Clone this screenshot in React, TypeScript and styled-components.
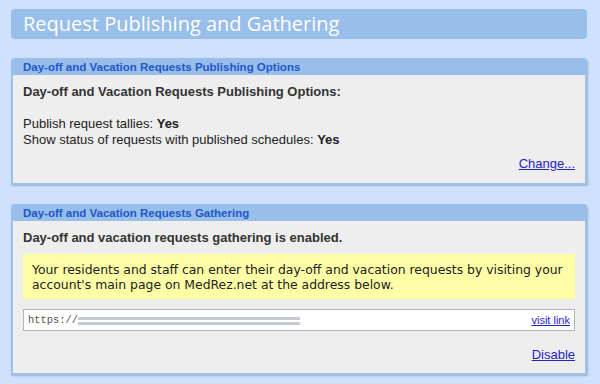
import React from "react";
import styled, { createGlobalStyle } from "styled-components";

const Global = createGlobalStyle`
  html, body { margin: 0; padding: 0; background: #cfe1fc; }
  body { font-family: "Liberation Sans", Arial, sans-serif; }
`;

const Page = styled.div`
  width: 600px;
  height: 384px;
  box-sizing: border-box;
  padding: 9px 13px 0 11px;
  display: flex;
  flex-direction: column;
  gap: 19px;
  background: #cfe1fc;
`;

const TitleBar = styled.h1`
  margin: 0;
  height: 30px;
  box-sizing: border-box;
  padding: 0 12px;
  background: #98bee9;
  border-radius: 4px;
  color: #ffffff;
  font-family: "Open Sans", "DejaVu Sans", sans-serif;
  font-weight: 400;
  font-size: 20px;
  line-height: 30px;
`;

const Panel = styled.section`
  display: flex;
  flex-direction: column;
  border-radius: 4px 4px 0 0;
  box-shadow: 1px 1px 2px rgba(60, 90, 130, 0.35);
`;

const PanelHeader = styled.div`
  height: 17px;
  padding: 0 12px;
  background: #98bee9;
  border-radius: 4px 4px 0 0;
  color: #2157c9;
  font-weight: 700;
  font-size: 11.5px;
  line-height: 18px;
`;

const PanelBody = styled.div<{ $height: number }>`
  height: ${(p) => p.$height}px;
  box-sizing: border-box;
  background: #eeeeee;
  border: 2px solid #9fc0e8;
  border-top: none;
  padding: 8px 10px 0 10px;
  display: flex;
  flex-direction: column;
  color: #222222;
`;

const Heading = styled.div`
  font-weight: 700;
  font-size: 13px;
  line-height: 18px;
  color: #333333;
`;

const InfoLines = styled.div`
  margin-top: 15px;
  font-size: 13px;
  line-height: 16px;
  color: #222222;
  b { font-weight: 700; }
`;

const LinkRow = styled.div<{ $top: number }>`
  margin-top: ${(p) => p.$top}px;
  display: flex;
  justify-content: flex-end;
  font-size: 13px;
  line-height: 16px;
`;

const Link = styled.a<{ $size?: number }>`
  color: #2424c8;
  text-decoration: underline;
  font-size: ${(p) => p.$size ?? 13}px;
  cursor: pointer;
`;

const Notice = styled.div`
  margin-top: 7px;
  background: #fefea6;
  padding: 8px 9px 7px;
  font-family: "DejaVu Sans", Verdana, sans-serif;
  font-size: 12.4px;
  line-height: 15px;
  color: #222222;
`;

const UrlBox = styled.div`
  margin-top: 10px;
  height: 22px;
  box-sizing: border-box;
  background: #ffffff;
  border: 1px solid #b5b5b5;
  display: flex;
  align-items: center;
  padding: 0 4px 0 4px;
`;

const UrlText = styled.span`
  font-family: "Liberation Mono", "Courier New", monospace;
  font-size: 10.4px;
  color: #555555;
`;

const Redacted = styled.span`
  display: inline-flex;
  flex-direction: column;
  gap: 2px;
  width: 222px;
  margin-top: 1px;
  span {
    height: 3px;
    background: #c5cad3;
  }
`;

const Spacer = styled.span`
  flex: 1;
`;

export default function App() {
  return (
    <>
      <Global />
      <Page>
        <TitleBar>Request Publishing and Gathering</TitleBar>
        <Panel>
          <PanelHeader>Day-off and Vacation Requests Publishing Options</PanelHeader>
          <PanelBody $height={110}>
            <Heading>Day-off and Vacation Requests Publishing Options:</Heading>
            <InfoLines>
              Publish request tallies: <b>Yes</b>
              <br />
              Show status of requests with published schedules: <b>Yes</b>
            </InfoLines>
            <LinkRow $top={8}>
              <Link>Change...</Link>
            </LinkRow>
          </PanelBody>
        </Panel>
        <Panel>
          <PanelHeader>Day-off and Vacation Requests Gathering</PanelHeader>
          <PanelBody $height={154}>
            <Heading>Day-off and vacation requests gathering is enabled.</Heading>
            <Notice>
              Your residents and staff can enter their day-off and vacation requests by visiting your
              account's main page on MedRez.net at the address below.
            </Notice>
            <UrlBox>
              <UrlText>https://</UrlText>
              <Redacted>
                <span />
                <span />
              </Redacted>
              <Spacer />
              <Link $size={11}>visit link</Link>
            </UrlBox>
            <LinkRow $top={16}>
              <Link>Disable</Link>
            </LinkRow>
          </PanelBody>
        </Panel>
      </Page>
    </>
  );
}
